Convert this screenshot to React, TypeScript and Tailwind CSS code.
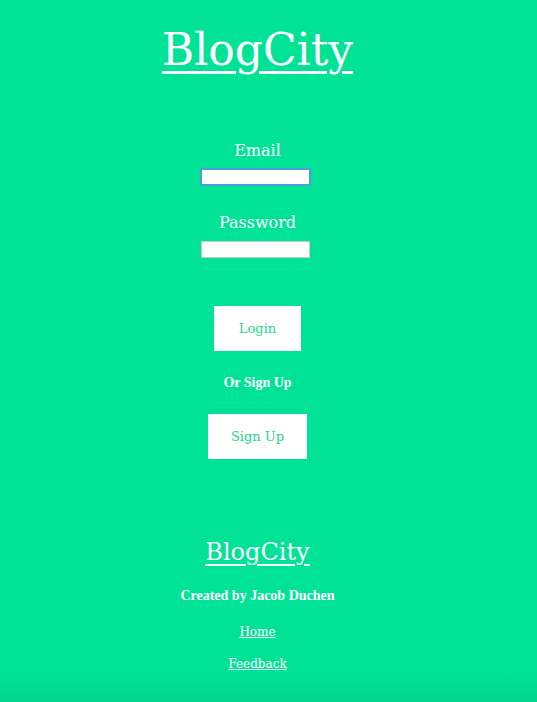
import { useState } from 'react';

export default function App() {
  const [email, setEmail] = useState('');
  const [password, setPassword] = useState('');

  return (
    <div className="min-h-[702px] w-full bg-[linear-gradient(to_bottom,#00e396_0%,#00e396_96%,#00d68e_100%)] font-['DejaVu_Serif',serif] text-white">
      <div className="flex w-[515px] flex-col items-center">
        {/* Header */}
        <a href="#" className="mt-[28px] text-[44px] leading-[44px] underline decoration-[3px] underline-offset-[6px]">
          BlogCity
        </a>

        {/* Login form */}
        <form className="mt-[69px] flex flex-col items-center" onSubmit={(e) => e.preventDefault()}>
          <label htmlFor="email" className="text-[16px] leading-[20px]">Email</label>
          <input
            id="email"
            type="email"
            value={email}
            onChange={(e) => setEmail(e.target.value)}
            className="mt-[7px] mr-[4px] h-[18px] w-[111px] border-2 border-[#4a9ed9] bg-white text-black outline-none"
          />
          <label htmlFor="password" className="mt-[27px] text-[16px] leading-[20px]">Password</label>
          <input
            id="password"
            type="password"
            value={password}
            onChange={(e) => setPassword(e.target.value)}
            className="mt-[8px] mr-[4px] h-[17px] w-[109px] border border-[#c8c8c8] bg-white text-black outline-none"
          />
          <button type="submit" className="mt-[48px] h-[45px] w-[87px] bg-white text-[13px] text-[#1fd98a]">
            Login
          </button>
          <p className="mt-[22px] font-['Liberation_Serif',serif] text-[14px] leading-[20px] font-bold">Or Sign Up</p>
          <button type="button" className="mt-[21px] h-[45px] w-[99px] bg-white text-[13px] text-[#1fd98a]">
            Sign Up
          </button>
        </form>

        {/* Footer */}
        <footer className="mt-[78px] flex flex-col items-center">
          <a href="#" className="text-[24px] leading-[30px] underline decoration-2 underline-offset-[4px]">BlogCity</a>
          <p className="mt-[19px] font-['Liberation_Serif',serif] text-[14px] leading-[20px] font-bold">Created by Jacob Duchen</p>
          <a href="#" className="mt-[16px] text-[12px] leading-[20px] underline">Home</a>
          <a href="#" className="mt-[12px] text-[12px] leading-[20px] underline">Feedback</a>
        </footer>
      </div>
    </div>
  );
}
